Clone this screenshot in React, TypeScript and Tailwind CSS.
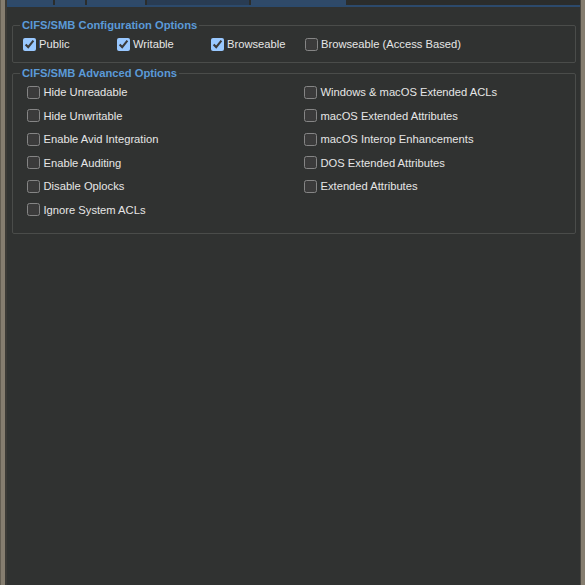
import React from 'react';

type Opt = { label: string; checked?: boolean };

const basicOptions: Opt[] = [
  { label: 'Public', checked: true },
  { label: 'Writable', checked: true },
  { label: 'Browseable', checked: true },
  { label: 'Browseable (Access Based)' },
];

const advancedLeft: Opt[] = [
  { label: 'Hide Unreadable' },
  { label: 'Hide Unwritable' },
  { label: 'Enable Avid Integration' },
  { label: 'Enable Auditing' },
  { label: 'Disable Oplocks' },
  { label: 'Ignore System ACLs' },
];

const advancedRight: Opt[] = [
  { label: 'Windows & macOS Extended ACLs' },
  { label: 'macOS Extended Attributes' },
  { label: 'macOS Interop Enhancements' },
  { label: 'DOS Extended Attributes' },
  { label: 'Extended Attributes' },
];

// tabs at the top, mostly scrolled out of view
const tabs = [
  { w: 'w-[46px]', active: false },
  { w: 'w-[30px]', active: false },
  { w: 'w-[58px]', active: false },
  { w: 'w-[102px]', active: true },
  { w: 'w-[95px]', active: false },
];

const CheckItem: React.FC<{ opt: Opt }> = ({ opt }) => (
  <label className="flex items-center gap-[3.5px] h-[23.5px] pt-[1px] text-[#e6e6e6] cursor-default">
    <input
      type="checkbox"
      defaultChecked={opt.checked}
      className="w-[13px] h-[13px] m-0 scheme-dark shrink-0"
    />
    <span className="whitespace-nowrap">{opt.label}</span>
  </label>
);

const App: React.FC = () => {
  return (
    <div className="w-[585px] h-[585px] flex bg-[#857d6f] font-['Liberation_Sans',Arial,sans-serif] text-[11.2px] leading-[14px] overflow-hidden">
      {/* left window frame */}
      <div className="w-[7px] h-full bg-[#857d6f] border-l border-l-[#645e52] border-r-2 border-r-[#3b3a36]" />

      <div className="flex-1 flex flex-col bg-[#303231] min-w-0">
        {/* tab strip */}
        <div className="h-[5px] flex gap-[2px] bg-[#2b2d2c]">
          {tabs.map((t, i) => (
            <div
              key={i}
              className={`${t.w} h-full ${t.active ? 'bg-[#293c53]' : 'bg-[#2f4a69]'}`}
            />
          ))}
        </div>
        <div className="h-[2px] bg-[#2c4a6c]" />

        <div className="pl-[5px] pr-[4px] pt-[11px] flex flex-col gap-[3px]">
          <fieldset className="border border-[#4a4c4a] rounded-[2px] pl-[7px] pr-2 pb-[10px]">
            <legend className="px-[2px] font-bold text-[#5b9ad8] leading-[14px]">
              CIFS/SMB Configuration Options
            </legend>
            <div className="flex pl-[3px] pt-[4px] h-[20px] items-center">
              {basicOptions.map((o, i) => (
                <div key={o.label} className={i < 3 ? 'w-[94px]' : ''}>
                  <label className="flex items-center gap-[3px] h-[16px] text-[#e6e6e6]">
                    <input
                      type="checkbox"
                      defaultChecked={o.checked}
                      className="w-[13px] h-[13px] m-0 scheme-dark shrink-0"
                    />
                    <span className="whitespace-nowrap">{o.label}</span>
                  </label>
                </div>
              ))}
            </div>
          </fieldset>

          <fieldset className="border border-[#4a4c4a] rounded-[2px] pl-[7px] pr-2 pb-[12px]">
            <legend className="px-[2px] font-bold text-[#5b9ad8] leading-[14px]">
              CIFS/SMB Advanced Options
            </legend>
            <div className="grid grid-cols-[277px_1fr] pl-[7px]">
              <div className="flex flex-col">
                {advancedLeft.map((o) => (
                  <CheckItem key={o.label} opt={o} />
                ))}
              </div>
              <div className="flex flex-col">
                {advancedRight.map((o) => (
                  <CheckItem key={o.label} opt={o} />
                ))}
              </div>
            </div>
          </fieldset>
        </div>
      </div>

      {/* right window frame */}
      <div className="w-[5px] h-full bg-[#857d6f] border-l border-l-[#4a4842]" />
    </div>
  );
};

export default App;
